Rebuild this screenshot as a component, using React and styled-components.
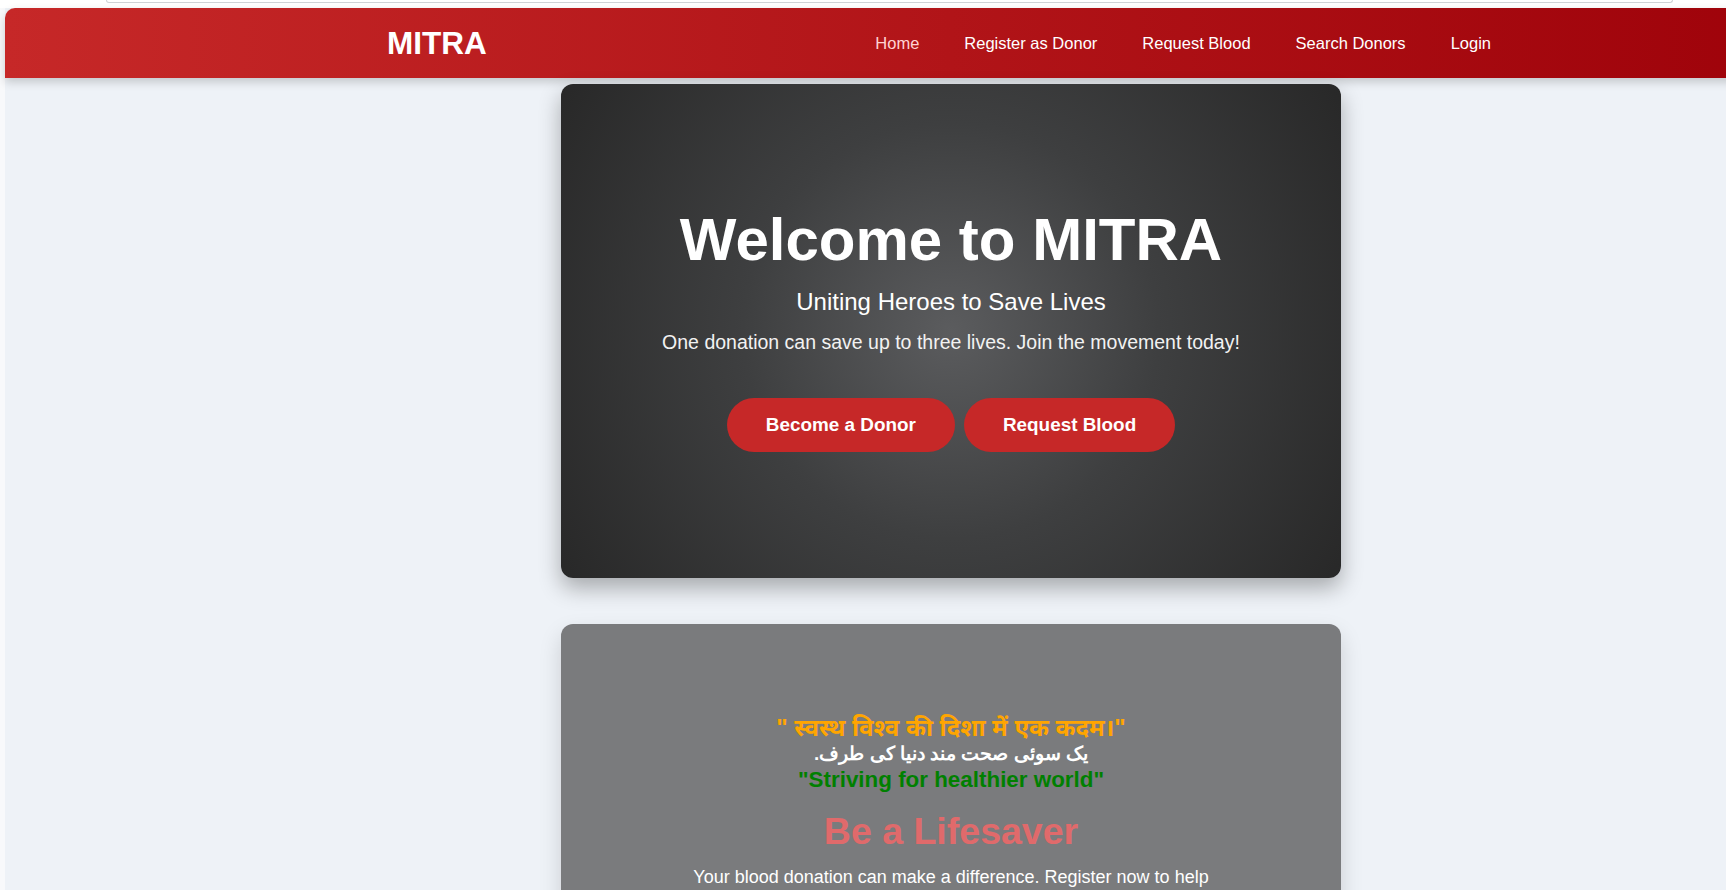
import React from "react";
import styled, { createGlobalStyle } from "styled-components";

const GlobalStyle = createGlobalStyle`
    html, body {
        margin: 0;
        padding: 0;
        overflow-x: hidden;
        background: #f8f9fb;
        font-family: "Liberation Sans", Arial, "Noto Sans", sans-serif;
    }
    * {
        box-sizing: border-box;
    }
`;

// TOP STRIP (edge of the search box above the page)

const TopStrip = styled.div`
    height: 8px;
    background: #ffffff;
    padding: 0 53px 0 106px;
`;

const SearchEdge = styled.div`
    height: 3px;
    border: 1px solid #cfd2d6;
    border-top: none;
    border-radius: 0 0 12px 12px;
`;

// PAGE

const Page = styled.div`
    width: 1892px;
    margin-left: 5px;
    min-height: 900px;
    background: #eef2f7;
`;

// NAVBAR

const StyledNav = styled.nav`
    height: 70px;
    background: linear-gradient(90deg, #c62828 0%, #9c0008 100%);
    border-radius: 10px 10px 0 0;
    box-shadow: 0 4px 10px rgba(0, 0, 0, 0.18);
`;

const NavInner = styled.div`
    width: 1200px;
    height: 100%;
    margin: 0 auto;
    padding: 0 44px 0 36px;
    display: flex;
    align-items: center;
    justify-content: space-between;
`;

const Logo = styled.div`
    font-size: 31.5px;
    font-weight: 700;
    color: #ffffff;
`;

const NavLinks = styled.ul`
    display: flex;
    gap: 13px;
    list-style: none;
    margin: 0;
    padding: 0;
`;

const NavLink = styled.a`
    display: block;
    padding: 8px 16px;
    font-size: 16.5px;
    color: ${(p) => (p.$active ? "#ffd3d3" : "#ffffff")};
    text-decoration: none;
`;

// CARDS

const Main = styled.main`
    padding-top: 6px;
    display: flex;
    flex-direction: column;
    align-items: center;
    gap: 46px;
`;

const HeroCard = styled.section`
    width: 780px;
    height: 494px;
    border-radius: 12px;
    background: radial-gradient(circle at 50% 50%, #5b5c5e 0%, #3e3f40 45%, #282828 100%);
    box-shadow: 0 10px 22px rgba(0, 0, 0, 0.3);
    display: flex;
    flex-direction: column;
    align-items: center;
    justify-content: center;
    text-align: center;
    color: #ffffff;
    padding-bottom: 6px;
`;

const HeroTitle = styled.h1`
    margin: 0;
    font-size: 60px;
    line-height: 72px;
    font-weight: 700;
`;

const HeroSubtitle = styled.h2`
    margin: 12px 0 0;
    font-size: 24px;
    line-height: 28px;
    font-weight: 400;
`;

const HeroText = styled.p`
    margin: 15px 0 0;
    font-size: 19.5px;
    line-height: 22px;
    color: #f2f2f2;
`;

const ButtonRow = styled.div`
    display: flex;
    gap: 9px;
    margin-top: 45px;
`;

const RedButton = styled.a`
    display: inline-block;
    padding: 16px 39px;
    font-size: 18.9px;
    line-height: 21.5px;
    font-weight: 700;
    color: #ffffff;
    background: #c62828;
    border-radius: 30px;
    text-decoration: none;
`;

const QuoteCard = styled.section`
    width: 780px;
    min-height: 494px;
    border-radius: 12px;
    background: #7a7b7d;
    box-shadow: 0 10px 22px rgba(0, 0, 0, 0.15);
    padding: 91px 40px 40px;
    display: flex;
    flex-direction: column;
    align-items: center;
    text-align: center;
`;

const QuoteLine = styled.p`
    margin: 0;
    font-size: ${(p) => p.$size};
    line-height: 26px;
    font-weight: 700;
    color: ${(p) => p.$color};
`;

const LifesaverTitle = styled.h2`
    margin: 16px 0 0;
    font-size: 37.5px;
    line-height: 44px;
    font-weight: 700;
    color: #e06a6b;
`;

const LifesaverText = styled.p`
    margin: 11px 0 0;
    max-width: 540px;
    font-size: 18px;
    line-height: 27px;
    color: #ffffff;
`;

const links = [
    { id: 1, text: "Home", active: true },
    { id: 2, text: "Register as Donor" },
    { id: 3, text: "Request Blood" },
    { id: 4, text: "Search Donors" },
    { id: 5, text: "Login" },
];

const App = () => {
    return (
        <>
            <GlobalStyle />
            <TopStrip>
                <SearchEdge />
            </TopStrip>
            <Page>
                <StyledNav>
                    <NavInner>
                        <Logo>MITRA</Logo>
                        <NavLinks>
                            {links.map((link) => (
                                <li key={link.id}>
                                    <NavLink href="#" $active={link.active}>{link.text}</NavLink>
                                </li>
                            ))}
                        </NavLinks>
                    </NavInner>
                </StyledNav>

                <Main>
                    <HeroCard>
                        <HeroTitle>Welcome to MITRA</HeroTitle>
                        <HeroSubtitle>Uniting Heroes to Save Lives</HeroSubtitle>
                        <HeroText>One donation can save up to three lives. Join the movement today!</HeroText>
                        <ButtonRow>
                            <RedButton href="#">Become a Donor</RedButton>
                            <RedButton href="#">Request Blood</RedButton>
                        </ButtonRow>
                    </HeroCard>

                    <QuoteCard>
                        <QuoteLine $size="24px" $color="#ffa500">" स्वस्थ विश्व की दिशा में एक कदम।"</QuoteLine>
                        <QuoteLine $size="19px" $color="#ffffff" dir="rtl">یک سوئی صحت مند دنیا کی طرف.</QuoteLine>
                        <QuoteLine $size="22.4px" $color="#008000">"Striving for healthier world"</QuoteLine>
                        <LifesaverTitle>Be a Lifesaver</LifesaverTitle>
                        <LifesaverText>
                            Your blood donation can make a difference. Register now to help save lives in your community.
                        </LifesaverText>
                    </QuoteCard>
                </Main>
            </Page>
        </>
    );
};

export default App;
